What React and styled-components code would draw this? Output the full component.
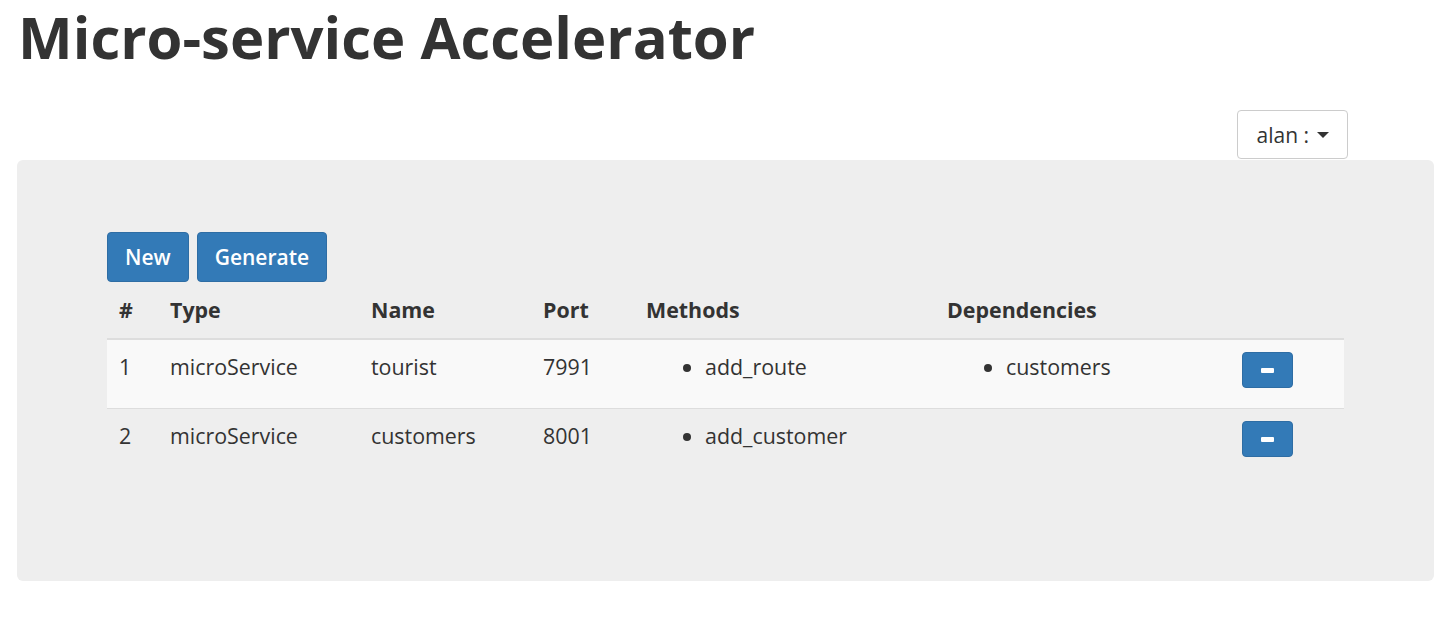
import React from "react";
import styled, { createGlobalStyle } from "styled-components";

const Global = createGlobalStyle`
  html, body { margin: 0; padding: 0; background: #fff; }
  body {
    font-family: "Open Sans", "Noto Sans", sans-serif;
    color: #333;
    font-size: 21.4px;
  }
  * { box-sizing: border-box; }
`;

const Page = styled.div`
  padding: 0 19px 0 17px;
`;

const Title = styled.h1`
  margin: 0;
  padding: 0 0 0 1px;
  font-size: 58px;
  font-weight: 700;
  line-height: 74px;
  color: #333;
  letter-spacing: 0;
`;

const UserBar = styled.div`
  display: flex;
  justify-content: flex-end;
  padding: 36px 86px 1px 0;
`;

const DropButton = styled.button`
  display: inline-flex;
  align-items: center;
  gap: 8px;
  height: 49px;
  padding: 0 18px 0 19px;
  background: #fff;
  border: 1px solid #ccc;
  border-radius: 4px;
  font-family: inherit;
  font-size: 21px;
  color: #333;
`;

const Caret = styled.span`
  width: 0;
  height: 0;
  border-left: 6px solid transparent;
  border-right: 6px solid transparent;
  border-top: 6px solid #333;
`;

const Well = styled.div`
  background: #eee;
  border-radius: 6px;
  padding: 72px 90px 104px 90px;
`;

const Toolbar = styled.div`
  display: flex;
  gap: 8px;
`;

const Button = styled.button`
  height: 50px;
  padding: 0 17px;
  background: #337ab7;
  border: 1px solid #2e6da4;
  border-radius: 4px;
  color: #fff;
  font-family: inherit;
  font-size: 21px;
  font-weight: 600;
  line-height: 1;
`;

const MinusButton = styled.button`
  width: 51px;
  height: 36px;
  background: #337ab7;
  border: 1px solid #2e6da4;
  border-radius: 4px;
  display: flex;
  align-items: center;
  justify-content: center;
  padding: 0;
`;

const Dash = styled.span`
  width: 13px;
  height: 5px;
  background: #fff;
  border-radius: 1px;
`;

const Table = styled.table`
  width: 100%;
  border-collapse: collapse;
  table-layout: fixed;
`;

const Col = styled.col`
  width: ${(p) => p.$w}px;
`;

const Th = styled.th`
  text-align: left;
  font-weight: 700;
  padding: 13px 12px;
  line-height: 30px;
  border-bottom: 2px solid #ddd;
  vertical-align: bottom;
`;

const Tr = styled.tr`
  background: ${(p) => (p.$striped ? "#f9f9f9" : "transparent")};
  border-bottom: ${(p) => (p.$last ? "none" : "1px solid #ddd")};
`;

const Td = styled.td`
  padding: 12px;
  line-height: 30px;
  vertical-align: top;
`;

const List = styled.ul`
  margin: 0 0 14px 0;
  padding-left: 59px;
`;

const rows = [
  { id: 1, type: "microService", name: "tourist", port: 7991, methods: ["add_route"], deps: ["customers"] },
  { id: 2, type: "microService", name: "customers", port: 8001, methods: ["add_customer"], deps: [] },
];

export default function App() {
  return (
    <>
      <Global />
      <Page>
        <Title>Micro-service Accelerator</Title>
        <UserBar>
          <DropButton>
            alan : <Caret />
          </DropButton>
        </UserBar>
        <Well>
          <Toolbar>
            <Button>New</Button>
            <Button>Generate</Button>
          </Toolbar>
          <Table>
            <colgroup>
              <Col $w={51} />
              <Col $w={201} />
              <Col $w={172} />
              <Col $w={103} />
              <Col $w={301} />
              <Col $w={295} />
              <Col $w={114} />
            </colgroup>
            <thead>
              <tr>
                <Th>#</Th>
                <Th>Type</Th>
                <Th>Name</Th>
                <Th>Port</Th>
                <Th>Methods</Th>
                <Th>Dependencies</Th>
                <Th></Th>
              </tr>
            </thead>
            <tbody>
              {rows.map((r, i) => (
                <Tr key={r.id} $striped={i % 2 === 0} $last={i === rows.length - 1}>
                  <Td>{r.id}</Td>
                  <Td>{r.type}</Td>
                  <Td>{r.name}</Td>
                  <Td>{r.port}</Td>
                  <Td>
                    <List>
                      {r.methods.map((m) => (
                        <li key={m}>{m}</li>
                      ))}
                    </List>
                  </Td>
                  <Td>
                    <List>
                      {r.deps.map((d) => (
                        <li key={d}>{d}</li>
                      ))}
                    </List>
                  </Td>
                  <Td>
                    <MinusButton>
                      <Dash />
                    </MinusButton>
                  </Td>
                </Tr>
              ))}
            </tbody>
          </Table>
        </Well>
      </Page>
    </>
  );
}
